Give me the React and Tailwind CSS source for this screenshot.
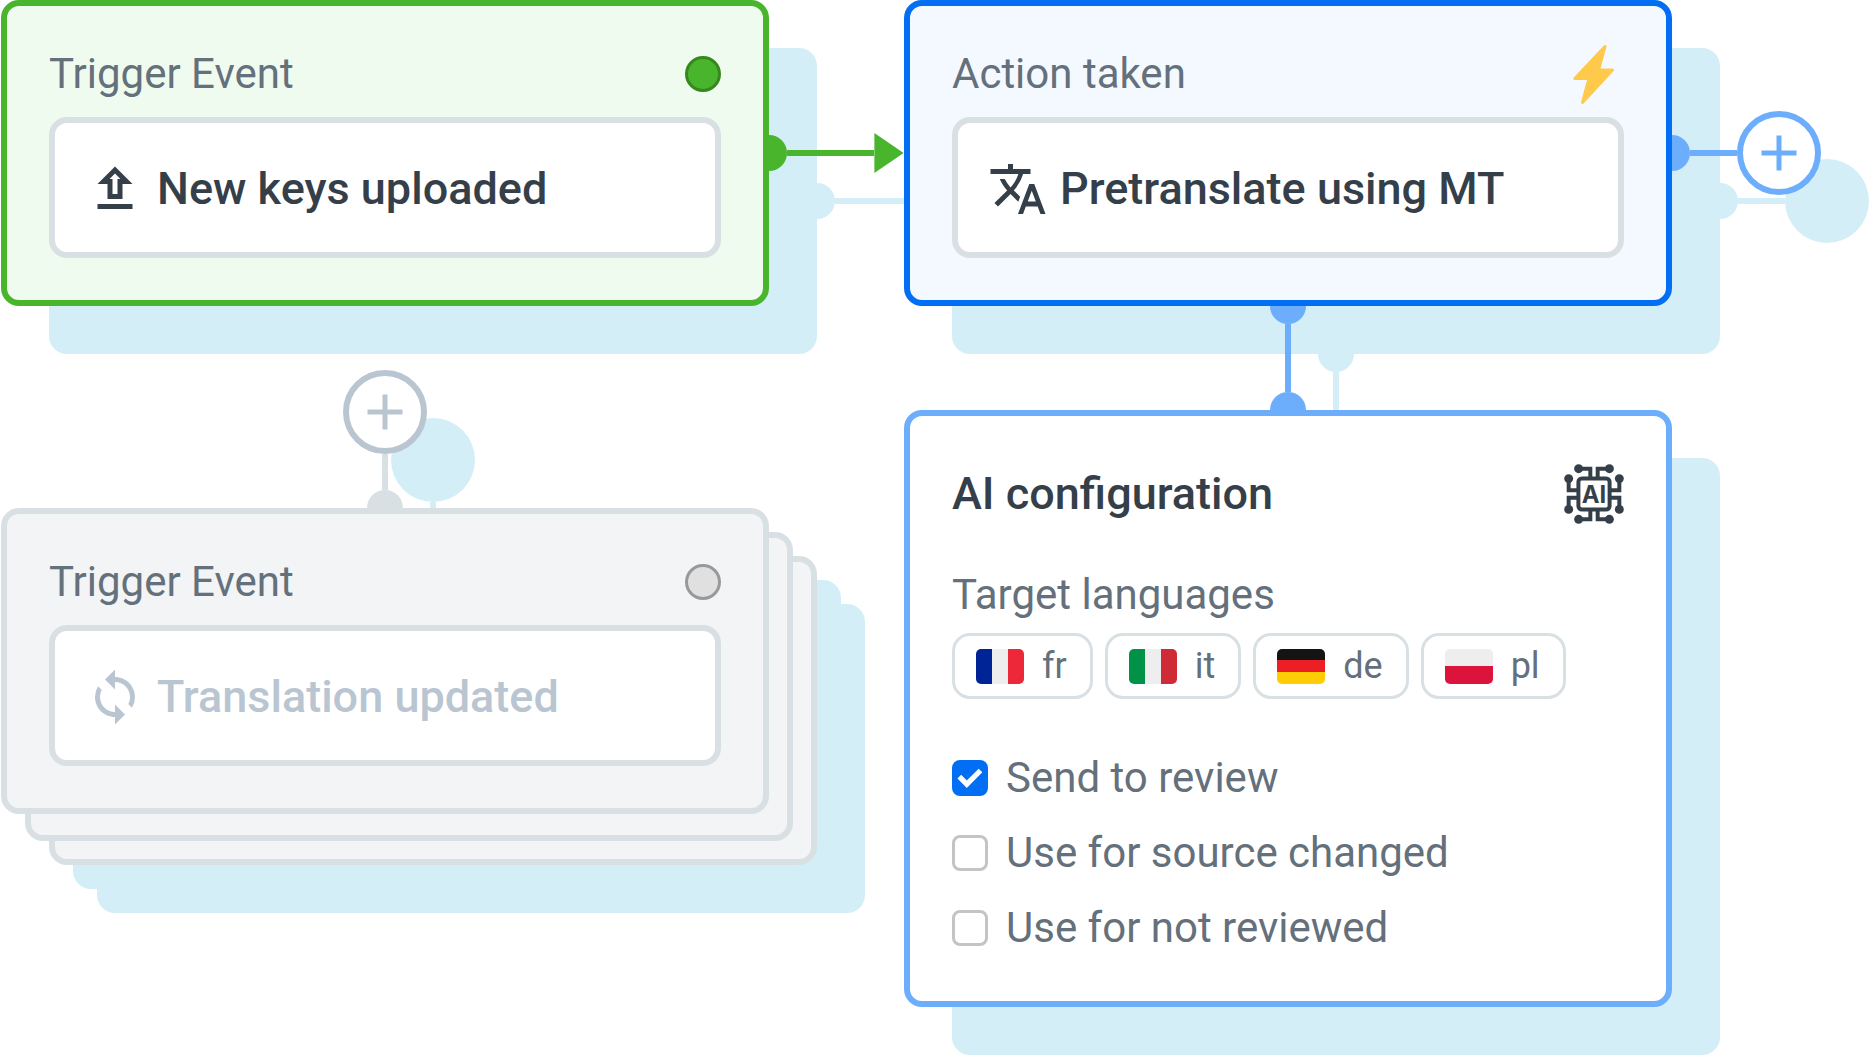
import React from "react";
import { MdAdd, MdSync, MdTranslate } from "react-icons/md";

const SHADOW = "shadow-[48px_48px_0_#d4eef7]";

function UploadIcon({ className }) {
  return (
    <svg viewBox="0 0 24 24" className={className} fill="currentColor" aria-hidden="true">
      <path d="M9 16h6v-6h4l-7-7-7 7h4v6zm3-10.17L14.17 8H13v6h-2V8H9.83L12 5.83zM5 18h14v2H5v-2z" />
    </svg>
  );
}

function BoltIcon() {
  return (
    <svg viewBox="0 0 60 60" className="size-[60px]" aria-hidden="true">
      <path
        d="M41 2.5 34.5 26H48.5L18.5 58.5 25 34.5H10.8Z"
        fill="#ffca4b"
        stroke="#ffca4b"
        strokeWidth="3"
        strokeLinejoin="round"
      />
    </svg>
  );
}

function AiChipIcon() {
  const nodes = [
    [14.7, 4.7], [45.7, 4.7], [4.7, 14.7], [55.7, 14.7],
    [4.7, 45.7], [55.7, 45.7], [14.7, 55.7], [45.7, 55.7],
  ];
  return (
    <svg viewBox="0 0 60.4 60.4" className="size-[60px]" aria-hidden="true">
      <g fill="none" stroke="#353f49" strokeWidth="4">
        <rect x="14.5" y="14.5" width="31.4" height="31.4" rx="3.5" />
        <path d="M14.7 4.7H26.5V14M45.7 4.7H33.9V14M14.7 55.7H26.5V46M45.7 55.7H33.9V46" />
        <path d="M4.7 14.7V26.5H14M4.7 45.7V33.9H14M55.7 14.7V26.5H46M55.7 45.7V33.9H46" />
      </g>
      {nodes.map(([x, y]) => (
        <circle key={`${x}-${y}`} cx={x} cy={y} r="4.5" fill="#353f49" />
      ))}
      <text
        x="30.2"
        y="39"
        textAnchor="middle"
        fill="#353f49"
        fontFamily="Inter, sans-serif"
        fontSize="24"
        fontWeight="700"
      >
        AI
      </text>
    </svg>
  );
}

function StatusDot({ className }) {
  return <span className={`size-9 rounded-full border-[3px] ${className}`} />;
}

function EventCard({ label, badge, icon: Icon, text, className, textClass }) {
  return (
    <section className={`relative rounded-[18px] border-[6px] px-[42px] pt-[38px] pb-[42px] ${className}`}>
      <header className="flex h-[60px] items-center justify-between">
        <h2 className="text-[42px] leading-[48px] text-[#64707b]">{label}</h2>
        {badge}
      </header>
      <div
        className={`mt-[13px] flex h-[141px] items-center gap-3 rounded-[18px] border-[6px] border-[#d9e0e4] bg-white pt-0.5 pl-[30px] ${textClass}`}
      >
        <Icon className="size-[60px] shrink-0" />
        <span className="text-[45px] leading-[52px] font-medium whitespace-nowrap">{text}</span>
      </div>
    </section>
  );
}

function AddButton({ label, className }) {
  return (
    <button
      type="button"
      aria-label={label}
      className={`relative flex size-[84px] shrink-0 items-center justify-center rounded-full border-[6px] bg-white ${SHADOW} ${className}`}
    >
      <MdAdd className="size-[60px] shrink-0" />
    </button>
  );
}

const LANGUAGES = [
  { code: "fr", dir: "flex-row", stripes: ["bg-[#002495]", "bg-[#eeeeee]", "bg-[#ed2939]"] },
  { code: "it", dir: "flex-row", stripes: ["bg-[#009246]", "bg-[#eeeeee]", "bg-[#ce2b37]"] },
  { code: "de", dir: "flex-col", stripes: ["bg-[#141414]", "bg-[#ed1f24]", "bg-[#ffcd05]"] },
  { code: "pl", dir: "flex-col", stripes: ["bg-[#eeeeee]", "bg-[#dc143c]"] },
];

function LanguageChip({ code, dir, stripes }) {
  return (
    <li className="flex h-[66px] items-center gap-[18px] rounded-[18px] border-[3px] border-[#d9e0e3] pr-[23px] pl-[21px]">
      <span className={`flex h-[35px] w-12 overflow-hidden rounded-[5px] ${dir}`}>
        {stripes.map((s) => (
          <span key={s} className={`flex-1 ${s}`} />
        ))}
      </span>
      <span className="text-[36px] leading-[42px] text-[#64707b]">{code}</span>
    </li>
  );
}

function Option({ label, checked }) {
  return (
    <label className="flex items-center gap-[18px] text-[42px] leading-[48px] text-[#64707b]">
      <span className="relative size-9 shrink-0">
        <input
          type="checkbox"
          defaultChecked={checked}
          className="peer block size-9 appearance-none rounded-[8px] border-[3px] border-[#c4c4c4] bg-white checked:border-[#026ef4] checked:bg-[#026ef4]"
        />
        <svg
          viewBox="0 0 36 36"
          className="pointer-events-none absolute inset-0 hidden size-9 peer-checked:block"
          aria-hidden="true"
        >
          <path d="M7.3 16.7 14.8 24.2 28.5 10.5" fill="none" stroke="#fff" strokeWidth="5.2" />
        </svg>
      </span>
      {label}
    </label>
  );
}

export default function App() {
  return (
    <main className="flex items-start bg-white pr-12 pb-12 pl-px font-['Roboto',sans-serif]">
      <div className="relative min-w-0 flex-1">
        <EventCard
          label="Trigger Event"
          badge={<StatusDot className="border-[#37871f] bg-[#48b52c]" />}
          icon={UploadIcon}
          text="New keys uploaded"
          className={`border-[#48b52c] bg-[#f0fbef] ${SHADOW}`}
          textClass="text-[#353f49]"
        />
        <div className="relative mt-16 flex flex-col items-center">
          <AddButton label="Add trigger" className="border-[#bac5d2] text-[#bac5d2]" />
          <span className={`h-9 w-1.5 bg-[#d9e0e4] ${SHADOW}`} />
          <span className="h-[18px] w-9 rounded-t-full bg-[#d9e0e4]" />
        </div>
        <div className="relative">
          <div className="absolute top-12 -right-12 -bottom-[51px] left-12 rounded-[18px] border-[6px] border-[#d9e0e4] bg-[#f2f4f6] shadow-[24px_24px_0_#d4eef7,48px_48px_0_#d4eef7]" />
          <div className="absolute top-6 -right-6 -bottom-[27px] left-6 rounded-[18px] border-[6px] border-[#d9e0e4] bg-[#f2f4f6]" />
          <EventCard
            label="Trigger Event"
            badge={<StatusDot className="border-[#999999] bg-[#e0e0e0]" />}
            icon={MdSync}
            text="Translation updated"
            className="border-[#d9e0e4] bg-[#f2f4f6]"
            textClass="text-[#bac5d2]"
          />
        </div>
      </div>

      <div className="relative flex w-[135px] shrink-0 items-center pt-[133px]">
        <span className={`h-9 w-[18px] rounded-r-full bg-[#48b52c] ${SHADOW}`} />
        <span className={`h-1.5 flex-1 bg-[#48b52c] ${SHADOW}`} />
        <svg viewBox="0 0 30 41" className="h-10 w-[30px]" aria-hidden="true">
          <path d="M0 0 30 20.5 0 41Z" fill="#48b52c" />
        </svg>
      </div>

      <div className="relative min-w-0 flex-1">
        <EventCard
          label="Action taken"
          badge={<BoltIcon />}
          icon={MdTranslate}
          text="Pretranslate using MT"
          className={`border-[#026ef4] bg-[#f4f9ff] ${SHADOW}`}
          textClass="text-[#353f49]"
        />
        <div className="relative flex h-[104px] flex-col items-center">
          <span className={`h-[18px] w-9 rounded-b-full bg-[#6cadfc] ${SHADOW}`} />
          <span className={`w-1.5 flex-1 bg-[#6cadfc] ${SHADOW}`} />
          <span className="h-[18px] w-9 rounded-t-full bg-[#6cadfc]" />
        </div>
        <section
          className={`relative rounded-[18px] border-[6px] border-[#6cadfc] bg-white px-[42px] pt-12 pb-[49px] ${SHADOW}`}
        >
          <header className="flex h-[60px] items-center justify-between">
            <h2 className="text-[45px] leading-[52px] font-medium text-[#353f49]">AI configuration</h2>
            <AiChipIcon />
          </header>
          <h3 className="mt-[47px] text-[42px] leading-[48px] text-[#64707b]">Target languages</h3>
          <ul className="mt-[14px] flex gap-3">
            {LANGUAGES.map((l) => (
              <LanguageChip key={l.code} {...l} />
            ))}
          </ul>
          <div className="mt-[55px] flex flex-col items-start gap-[27px]">
            <Option label="Send to review" checked />
            <Option label="Use for source changed" />
            <Option label="Use for not reviewed" />
          </div>
        </section>
      </div>

      <div className="relative flex w-[149px] shrink-0 items-center pt-[111px]">
        <span className={`h-9 w-[18px] rounded-r-full bg-[#6cadfc] ${SHADOW}`} />
        <span className={`h-1.5 flex-1 bg-[#6cadfc] ${SHADOW}`} />
        <AddButton label="Add action" className="border-[#6cadfc] text-[#6cadfc]" />
      </div>
    </main>
  );
}
